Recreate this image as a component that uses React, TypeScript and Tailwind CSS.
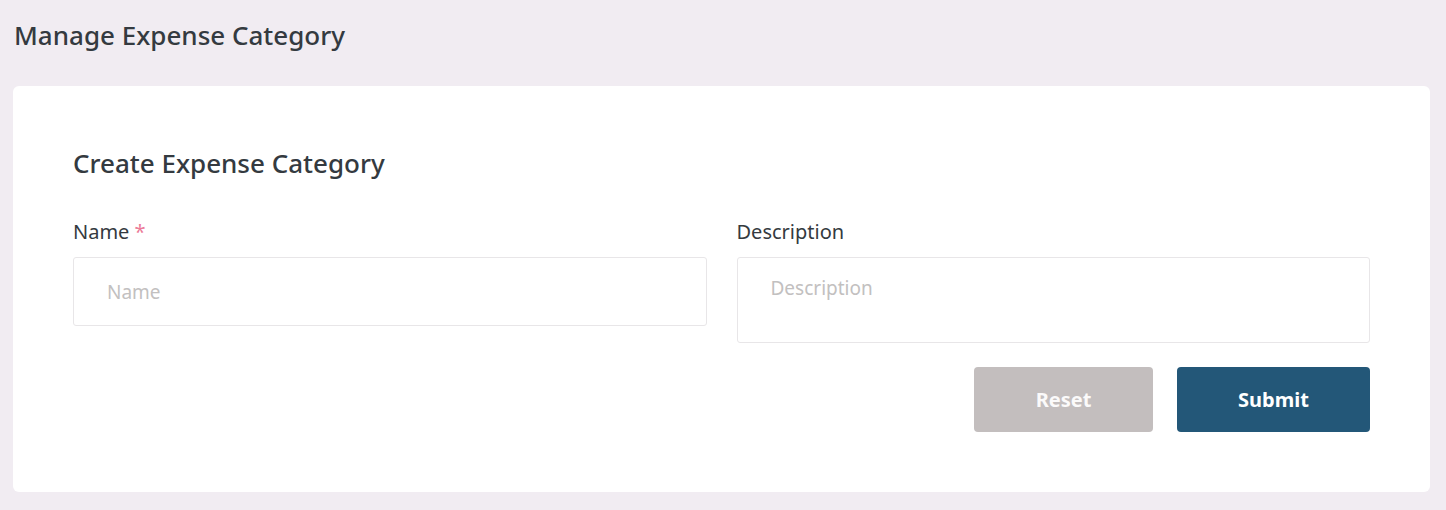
export default function App() {
  return (
    <div
      className="min-h-[510px] bg-[#f1ecf2] pl-[13px] pr-[16px] pt-[17px] pb-[18px] text-[#343a40]"
      style={{ fontFamily: '"Noto Sans", "Open Sans", sans-serif' }}
    >
      <h1 className="pl-px text-[26px] font-medium leading-[36px]">Manage Expense Category</h1>

      <div className="mt-[33px] rounded-[6px] bg-white px-[60px] pt-[59px] pb-[60px]">
        <h2 className="text-[26px] font-medium leading-[36px]">Create Expense Category</h2>

        <form className="mt-[38px]">
          <div className="grid grid-cols-2 gap-[30px]">
            <div>
              <label className="block text-[20px] leading-[26px]">
                Name <span className="text-[#ec7b98]">*</span>
              </label>
              <input
                type="text"
                placeholder="Name"
                className="mt-[12px] h-[69px] w-full rounded-[3px] border border-[#e8e6e8] px-[33px] text-[19px] outline-none placeholder:text-[#c2c0c0]"
              />
            </div>
            <div>
              <label className="block text-[20px] leading-[26px]">Description</label>
              <textarea
                placeholder="Description"
                className="mt-[12px] block h-[86px] w-full resize-none rounded-[3px] border border-[#e8e6e8] px-[33px] pt-[17px] text-[19px] leading-[26px] outline-none placeholder:text-[#c2c0c0]"
              />
            </div>
          </div>

          <div className="mt-[24px] flex justify-end gap-[24px]">
            <button
              type="reset"
              className="h-[65px] w-[179px] rounded-[4px] bg-[#c3bebe] text-[20px] font-bold text-[#fbfafa]"
            >
              Reset
            </button>
            <button
              type="submit"
              className="h-[65px] w-[193px] rounded-[4px] bg-[#235778] text-[20px] font-bold text-white"
            >
              Submit
            </button>
          </div>
        </form>
      </div>
    </div>
  );
}
